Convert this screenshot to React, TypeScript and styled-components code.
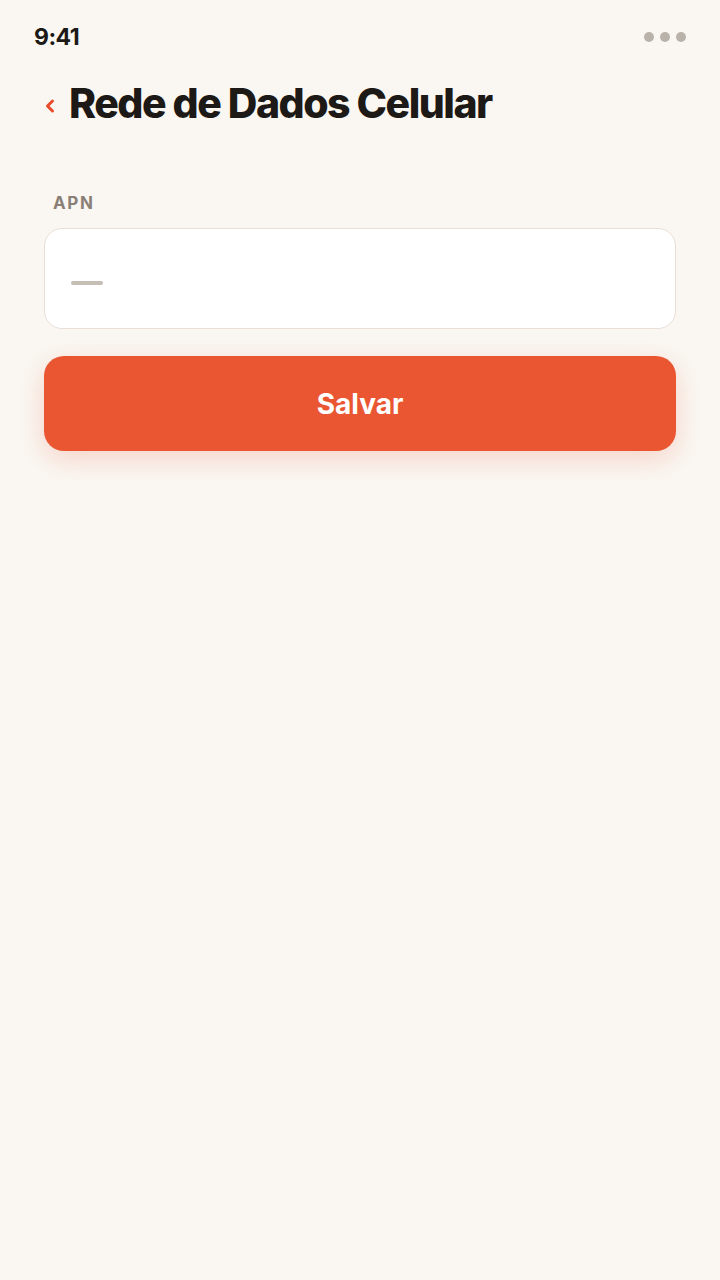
import React from "react";
import styled, { createGlobalStyle } from "styled-components";

const GlobalStyle = createGlobalStyle`
  html, body {
    margin: 0;
    padding: 0;
    background: #faf7f2;
  }
  #root {
    min-height: 100vh;
  }
`;

const Screen = styled.div`
  min-height: 1280px;
  background: #faf7f2;
  font-family: Inter, "Liberation Sans", sans-serif;
  display: flex;
  flex-direction: column;
`;

const StatusBar = styled.div`
  height: 74px;
  padding: 0 34px;
  display: flex;
  align-items: center;
  justify-content: space-between;
  box-sizing: border-box;
`;

const Clock = styled.span`
  font-size: 23px;
  font-weight: 700;
  color: #1c1916;
  letter-spacing: -0.5px;
`;

const Dots = styled.div`
  display: flex;
  gap: 6px;
`;

const Dot = styled.span`
  width: 10px;
  height: 10px;
  border-radius: 50%;
  background: #b9b2ab;
`;

const Header = styled.div`
  display: flex;
  align-items: center;
  gap: 13px;
  padding: 0 44px;
  height: 58px;
`;

const BackButton = styled.button`
  border: 0;
  background: none;
  padding: 0;
  display: flex;
  align-items: center;
  cursor: pointer;
  margin-top: 6px;
`;

const Title = styled.h1`
  margin: 0;
  font-size: 41px;
  font-weight: 800;
  letter-spacing: -1.5px;
  color: #1c1916;
`;

const Form = styled.div`
  padding: 61px 44px 0;
  display: flex;
  flex-direction: column;
`;

const Label = styled.label`
  font-size: 17px;
  font-weight: 700;
  letter-spacing: 1.6px;
  color: #8a7f76;
  padding-left: 9px;
  margin-bottom: 15px;
`;

const Field = styled.div`
  height: 101px;
  box-sizing: border-box;
  border: 1px solid #e9dfd6;
  border-radius: 18px;
  background: #ffffff;
  display: flex;
  align-items: center;
  padding: 0 26px;
`;

const Placeholder = styled.span`
  width: 32px;
  height: 4px;
  border-radius: 2px;
  background: #c6bdb5;
  margin-top: 8px;
`;

const SaveButton = styled.button`
  margin-top: 27px;
  height: 95px;
  border: 0;
  border-radius: 20px;
  background: #e95631;
  color: #ffffff;
  font-family: Inter, "Liberation Sans", sans-serif;
  font-size: 28px;
  font-weight: 700;
  cursor: pointer;
  box-shadow: 0 8px 28px rgba(233, 86, 49, 0.22);
`;

export default function App() {
  return (
    <>
      <GlobalStyle />
      <Screen>
        <StatusBar>
          <Clock>9:41</Clock>
          <Dots>
            <Dot />
            <Dot />
            <Dot />
          </Dots>
        </StatusBar>
        <Header>
          <BackButton aria-label="Voltar">
            <svg width="12" height="16" viewBox="0 0 12 16">
              <path
                d="M8.5 3 L3.5 8 L8.5 13"
                fill="none"
                stroke="#ea4a2a"
                strokeWidth="3"
                strokeLinecap="round"
                strokeLinejoin="round"
              />
            </svg>
          </BackButton>
          <Title>Rede de Dados Celular</Title>
        </Header>
        <Form>
          <Label>APN</Label>
          <Field>
            <Placeholder />
          </Field>
          <SaveButton>Salvar</SaveButton>
        </Form>
      </Screen>
    </>
  );
}
